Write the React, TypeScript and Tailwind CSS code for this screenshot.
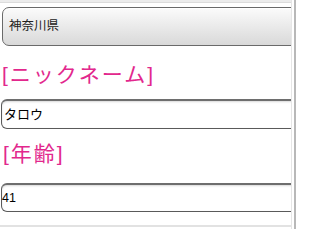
import React from 'react';

const jp = "font-['Liberation_Sans','Noto_Sans_CJK_JP',sans-serif]";

const App = () => {
  return (
    <div className={`w-[296px] h-[229px] overflow-hidden bg-white flex ${jp}`}>
      <div className="w-[291px] overflow-hidden flex flex-col">
        {/* top edge of previous block */}
        <div className="h-[3px] bg-[#ececec] border-b border-[#dcdcdc] w-full" />

        {/* prefecture select */}
        <div className="pt-[4px] pl-[2px]">
          <div className="w-[310px] h-[39px] rounded-[7px] border border-[#6a6a6a] bg-gradient-to-b from-[#fbfbfb] to-[#d9d9d9] flex items-center pl-[6px] text-[12.5px] text-[#222] shadow-[inset_0_1px_0_#fff]">
            神奈川県
          </div>
        </div>

        {/* nickname */}
        <div className="h-[53px] flex items-center pl-[2px] pt-[3px] text-[21px] tracking-[2px] leading-none text-[#e2288d]">
          [ニックネーム]
        </div>
        <div className="pl-[1px]">
          <div className="w-[310px] h-[30px] rounded-[6px] border border-[#5a5a5a] border-t-2 border-t-[#6e6e6e] bg-white flex items-center pl-[2px] text-[13px] text-black shadow-[inset_0_1px_2px_rgba(0,0,0,0.15)]">
            タロウ
          </div>
        </div>

        {/* age */}
        <div className="h-[54px] flex items-center pl-[3px] pb-[5px] text-[21px] tracking-[2px] leading-none text-[#e2288d]">
          [年齢]
        </div>
        <div className="pl-[1px]">
          <div className="w-[310px] h-[29px] rounded-[6px] border border-[#5a5a5a] border-t-2 border-t-[#6e6e6e] bg-white flex items-center pl-0 text-[12.5px] text-black shadow-[inset_0_1px_2px_rgba(0,0,0,0.15)]">
            41
          </div>
        </div>

        <div className="mt-[13px] h-[2px] bg-[#e2e2e2] w-full" />
      </div>
      <div className="w-[5px] h-full border-l border-[#e6e6e6] border-r-2 border-r-[#b8b8b8] bg-white" />
    </div>
  );
};

export default App;
